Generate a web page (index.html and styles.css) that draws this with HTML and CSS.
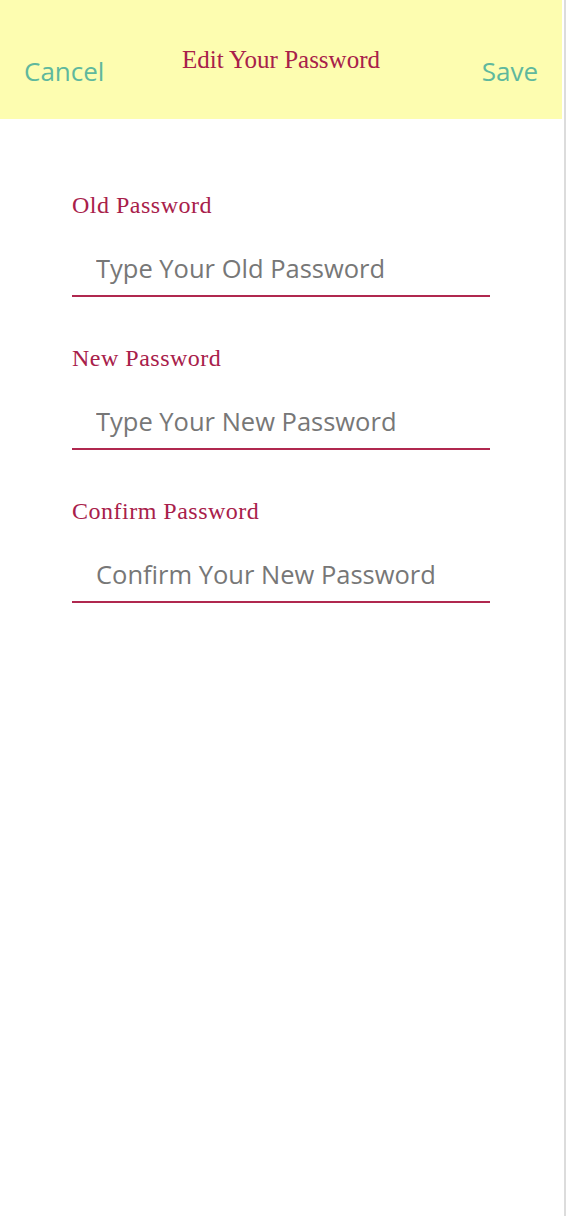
FILE: index.html
```html
<!DOCTYPE html>
<html lang="en">
<head>
<meta charset="utf-8">
<title>Edit Your Password</title>
<link rel="stylesheet" href="styles.css">
</head>
<body>
<div class="shell">
  <div class="app">
    <header class="topbar">
      <button class="nav-btn nav-left" type="button">Cancel</button>
      <h1 class="title">Edit Your Password</h1>
      <button class="nav-btn nav-right" type="button">Save</button>
    </header>
    <form class="form">
      <div class="field">
        <label class="label" for="old">Old Password</label>
        <input class="input" id="old" type="password" placeholder="Type Your Old Password">
      </div>
      <div class="field">
        <label class="label" for="new">New Password</label>
        <input class="input" id="new" type="password" placeholder="Type Your New Password">
      </div>
      <div class="field">
        <label class="label" for="confirm">Confirm Password</label>
        <input class="input" id="confirm" type="password" placeholder="Confirm Your New Password">
      </div>
    </form>
  </div>
  <div class="gutter"></div>
</div>
</body>
</html>
```
FILE: styles.css
```css
html, body {
  margin: 0;
  padding: 0;
  background: #ffffff;
}
.shell {
  display: flex;
  min-height: 1216px;
}
.app {
  width: 562px;
  flex: none;
}
.gutter {
  width: 2px;
  margin-left: 2px;
  background: #dcdcdc;
}
.topbar {
  height: 119px;
  background: #fdfdb0;
  display: grid;
  grid-template-columns: 1fr auto 1fr;
  align-items: start;
  padding: 0 24px;
  box-sizing: border-box;
}
.nav-btn {
  background: none;
  border: none;
  padding: 0;
  margin-top: 55px;
  font-family: "Open Sans", sans-serif;
  font-size: 26px;
  line-height: 32px;
  color: #5fb89d;
}
.nav-left {
  justify-self: start;
}
.nav-right {
  justify-self: end;
}
.title {
  margin: 44px 0 0;
  font-family: "Liberation Serif", serif;
  font-weight: normal;
  font-size: 25px;
  line-height: 32px;
  color: #a8204a;
}
.form {
  padding: 72px 72px 0;
  display: flex;
  flex-direction: column;
  gap: 47px;
}
.field {
  display: flex;
  flex-direction: column;
  width: 418px;
}
.label {
  font-family: "Liberation Serif", serif;
  font-size: 24px;
  line-height: 28px;
  letter-spacing: 0.5px;
  color: #a8204a;
}
.input {
  margin-top: 22px;
  height: 56px;
  box-sizing: border-box;
  border: none;
  border-bottom: 2px solid #b0284f;
  padding: 0 0 0 24px;
  font-family: "Open Sans", sans-serif;
  font-size: 25.5px;
  color: #333;
  outline: none;
  background: transparent;
}
.input::placeholder {
  color: #777777;
  opacity: 1;
}
```
